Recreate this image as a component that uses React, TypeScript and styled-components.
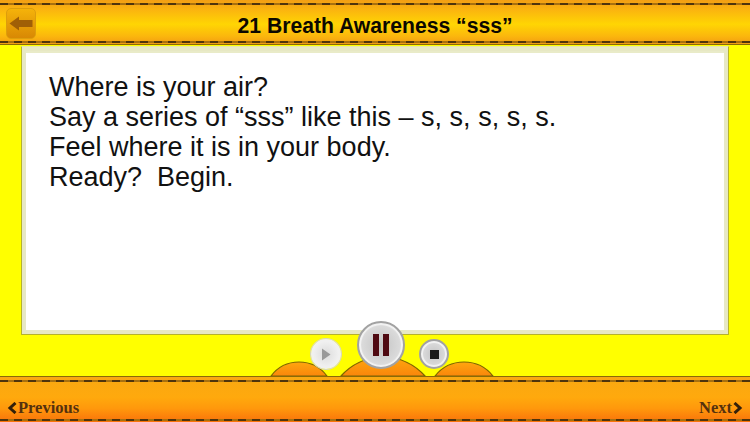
import React from 'react';
import styled, { createGlobalStyle } from 'styled-components';

const GlobalStyle = createGlobalStyle`
  html, body {
    margin: 0;
    padding: 0;
    background: #ffff00;
  }
`;

const LINES = [
  'Where is your air?',
  'Say a series of “sss” like this – s, s, s, s, s.',
  'Feel where it is in your body.',
  'Ready?  Begin.',
];

export default function App() {
  return (
    <Root>
      <GlobalStyle />
      <Header>
        <Stitch $top={3} />
        <BackButton aria-label="Back">
          <svg width="24" height="15" viewBox="0 0 24 15">
            <path d="M0.5 7.5 L10 0.5 V4 H23.5 V11 H10 V14.5 Z" fill="#a05f06" />
          </svg>
        </BackButton>
        <Title>21 Breath Awareness “sss”</Title>
        <Stitch $top={41} />
      </Header>
      <Main>
        <Card>
          <Lesson>
            {LINES.map((line) => (
              <div key={line}>{line}</div>
            ))}
          </Lesson>
        </Card>
        <Dock>
          <Bumps width="750" height="41" viewBox="0 0 750 41">
            <defs>
              <linearGradient id="bump" x1="0" y1="0" x2="0" y2="1">
                <stop offset="0" stopColor="#ffa60e" />
                <stop offset="1" stopColor="#fa860b" />
              </linearGradient>
            </defs>
            <BumpPath d="M271 41 A35 35 0 0 1 327 41 Z" fill="url(#bump)" />
            <BumpPath d="M341 41 A56 56 0 0 1 425 41 Z" fill="url(#bump)" />
            <BumpPath d="M435 41 A37 37 0 0 1 493 41 Z" fill="url(#bump)" />
          </Bumps>
          <Controls>
            <RoundButton $size={30} $dim aria-label="Play">
              <svg width="10" height="13" viewBox="0 0 10 13">
                <path d="M1 0.5 L9.5 6.5 L1 12.5 Z" fill="#9a9a9a" />
              </svg>
            </RoundButton>
            <RoundButton $size={48} $raised aria-label="Pause">
              <svg width="16" height="22" viewBox="0 0 16 22">
                <rect x="0" y="0" width="6" height="22" fill="#4f0a12" />
                <rect x="10" y="0" width="6" height="22" fill="#4f0a12" />
              </svg>
            </RoundButton>
            <RoundButton $size={30} aria-label="Stop">
              <svg width="9" height="9" viewBox="0 0 9 9">
                <rect width="9" height="9" fill="#1a1a1a" />
              </svg>
            </RoundButton>
          </Controls>
        </Dock>
      </Main>
      <Footer>
        <Stitch $top={3} />
        <NavLink>
          <Chevron viewBox="0 0 10 12">
            <path d="M8.5 1 L3 6 L8.5 11" />
          </Chevron>
          Previous
        </NavLink>
        <NavLink>
          Next
          <Chevron viewBox="0 0 10 12">
            <path d="M1.5 1 L7 6 L1.5 11" />
          </Chevron>
        </NavLink>
        <Stitch $top={42} />
      </Footer>
    </Root>
  );
}

const Root = styled.div`
  width: 750px;
  height: 422px;
  overflow: hidden;
  display: flex;
  flex-direction: column;
  background: #ffff00;
`;

const Header = styled.header`
  position: relative;
  height: 45px;
  flex: none;
  display: flex;
  align-items: center;
  padding: 3px 0 0 6px;
  box-sizing: border-box;
  background: linear-gradient(#f39f14 0%, #fbb40f 22%, #ffd503 55%, #fbb70d 82%, #f29c12 100%);
  border-bottom: 1px solid #8a6a08;
`;

const Stitch = styled.div<{ $top: number }>`
  position: absolute;
  left: 0;
  right: 0;
  top: ${(p) => p.$top}px;
  height: 2px;
  background: repeating-linear-gradient(90deg, #4f340c 0 8px, #a8700f 8px 14px);
`;

const BackButton = styled.div`
  width: 30px;
  height: 31px;
  flex: none;
  box-sizing: border-box;
  display: flex;
  align-items: center;
  justify-content: center;
  padding-right: 1px;
  border-radius: 5px;
  border: 1px solid #dd9d0c;
  background: linear-gradient(#f5b30a, #d88804);
`;

const Title = styled.h1`
  flex: 1;
  margin: 0 36px 0 0;
  padding-top: 5px;
  text-align: center;
  font-family: 'Liberation Sans', Arial, sans-serif;
  font-size: 21.15px;
  font-weight: bold;
  color: #0c0800;
`;

const Main = styled.main`
  flex: 1;
  min-height: 0;
  display: flex;
  flex-direction: column;
  padding-top: 1px;
`;

const Card = styled.section`
  width: 708px;
  height: 289px;
  margin-left: 21px;
  box-sizing: border-box;
  flex: none;
  background: #fff;
  border: 1px solid #b5b22c;
  border-top-color: #e6e6a8;
  box-shadow: inset 0 0 0 4px #e7e8c4, inset 0 6px 0 0 #e9ebc8;
  padding: 25px 27px;
`;

const Lesson = styled.div`
  font-family: 'Liberation Sans', Arial, sans-serif;
  font-size: 27px;
  line-height: 30px;
  color: #111;
  white-space: pre-wrap;
`;

const Dock = styled.div`
  position: relative;
  flex: 1;
`;

const Bumps = styled.svg`
  display: block;
`;

const BumpPath = styled.path`
  stroke: #7d6400;
  stroke-width: 1.2;
`;

const Controls = styled.div`
  position: absolute;
  left: 311px;
  top: -14px;
  display: flex;
  align-items: flex-start;
`;

const RoundButton = styled.div<{ $size: number; $dim?: boolean; $raised?: boolean }>`
  width: ${(p) => p.$size}px;
  height: ${(p) => p.$size}px;
  margin: ${(p) => (p.$raised ? '0 14px 0 16px' : '18px 0 0')};
  box-sizing: border-box;
  border-radius: 50%;
  display: flex;
  align-items: center;
  justify-content: center;
  border: ${(p) => (p.$dim ? '2px solid #f0f0f0' : '2px solid #a2a2a2')};
  background: ${(p) =>
    p.$dim
      ? 'radial-gradient(circle, #dcdcdc 0%, #f2f2f2 75%)'
      : 'radial-gradient(circle, #c4c4c4 0%, #dadada 60%, #f6f6f6 85%)'};
  box-shadow: ${(p) => (p.$dim ? '0 0 0 1px #d8d8c0' : 'inset 0 0 0 2px #f2f2f2')};
`;

const Footer = styled.footer`
  position: relative;
  height: 46px;
  flex: none;
  box-sizing: border-box;
  display: flex;
  align-items: flex-end;
  justify-content: space-between;
  padding: 0 7px 6px 7px;
  background: linear-gradient(#f9a812 0%, #ffa90d 45%, #ff980c 70%, #f9720a 100%);
  border-top: 1px solid #8a6a08;
`;

const NavLink = styled.div`
  display: flex;
  align-items: center;
  gap: 1px;
  font-family: 'Liberation Serif', 'Times New Roman', serif;
  font-size: 16.5px;
  line-height: 16px;
  font-weight: bold;
  color: #55310e;
`;

const Chevron = styled.svg`
  width: 10px;
  height: 12px;
  fill: none;
  stroke: #33200a;
  stroke-width: 3;
`;
